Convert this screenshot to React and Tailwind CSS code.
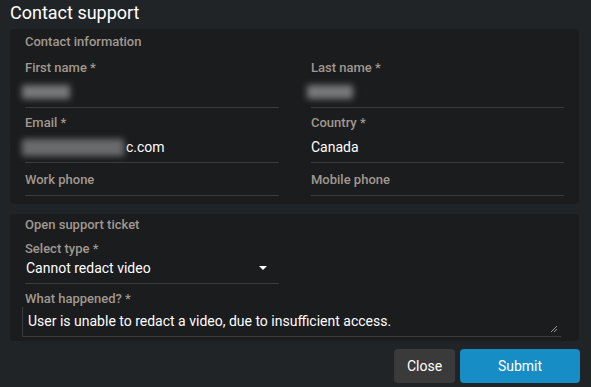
export default function App() {
  const label = 'text-[13px] leading-4 text-[#a0988f] font-medium';
  return (
    <div className="w-[591px] h-[387px] bg-[#212427] px-[10px] pt-[2px] font-['Roboto',sans-serif] text-white overflow-hidden">
      <h1 className="text-[18px] leading-[22px] text-white">Contact support</h1>

      <div className="mt-[5px] w-[569px] h-[175px] rounded bg-[#1b1c1e] px-[15px] pt-[5px]">
        <div className={label}>Contact information</div>
        <div className="mt-[10px] grid grid-cols-[254px_253px] gap-x-[32px] gap-y-[7px]">
          <div className="h-[48px] border-b border-[#3a3b3d]">
            <div className={label}>First name *</div>
            <div className="mt-[9px] ml-[-3px] w-[48px] h-[14px] bg-[#77787a] blur-[3px]"></div>
          </div>
          <div className="h-[48px] border-b border-[#3a3b3d]">
            <div className={label}>Last name *</div>
            <div className="mt-[9px] ml-[-4px] w-[46px] h-[14px] bg-[#77787a] blur-[3px]"></div>
          </div>
          <div className="h-[48px] border-b border-[#3a3b3d]">
            <div className={label}>Email *</div>
            <div className="mt-[4px] h-[24px] flex items-center text-[14px] ml-[-3px]">
              <div className="w-[102px] h-[17px] bg-[#6a6b6d] blur-[3px]"></div>
              <span className="ml-[2px]">c.com</span>
            </div>
          </div>
          <div className="h-[48px] border-b border-[#3a3b3d]">
            <div className={label}>Country *</div>
            <div className="mt-[4px] h-[24px] flex items-center text-[14px]">Canada</div>
          </div>
          <div className="mt-[2px] h-[24px] border-b border-[#3a3b3d]">
            <div className={label}>Work phone</div>
          </div>
          <div className="mt-[2px] h-[24px] border-b border-[#3a3b3d]">
            <div className={label}>Mobile phone</div>
          </div>
        </div>
      </div>

      <div className="mt-[10px] w-[569px] h-[127px] rounded bg-[#1b1c1e] px-[15px] pt-[3px]">
        <div className={label}>Open support ticket</div>
        <div className="mt-[8px] w-[254px] border-b border-[#3a3b3d] h-[43px]">
          <div className={label}>Select type *</div>
          <div className="mt-[1px] h-[20px] flex items-center justify-between text-[14px] pl-[1px] pr-[12px]">
            <span>Cannot redact video</span>
            <span className="w-0 h-0 border-l-[4px] border-r-[4px] border-t-[4px] border-l-transparent border-r-transparent border-t-white"></span>
          </div>
        </div>
        <div className={`${label} mt-[7px]`}>What happened? *</div>
        <div className="ml-[-3px] w-[539px] h-[30px] border-l border-b border-[#3a3b3d] relative">
          <div className="pl-[5px] pt-[6px] text-[14px] leading-4">User is unable to redact a video, due to insufficient access.</div>
          <svg className="absolute right-[3px] bottom-[3px]" width="8" height="8" viewBox="0 0 8 8">
            <path d="M1 7 L7 1 M4 7 L7 4" stroke="#9a9a9a" strokeWidth="1" />
          </svg>
        </div>
      </div>

      <div className="mt-[8px] flex justify-end gap-[5px] pr-[1px]">
        <button className="w-[61px] h-[34px] bg-[#3a3a3a] text-[14px] text-white rounded-sm">Close</button>
        <button className="w-[120px] h-[34px] bg-[#168dc4] text-[14px] text-white rounded-sm">Submit</button>
      </div>
    </div>
  );
}
